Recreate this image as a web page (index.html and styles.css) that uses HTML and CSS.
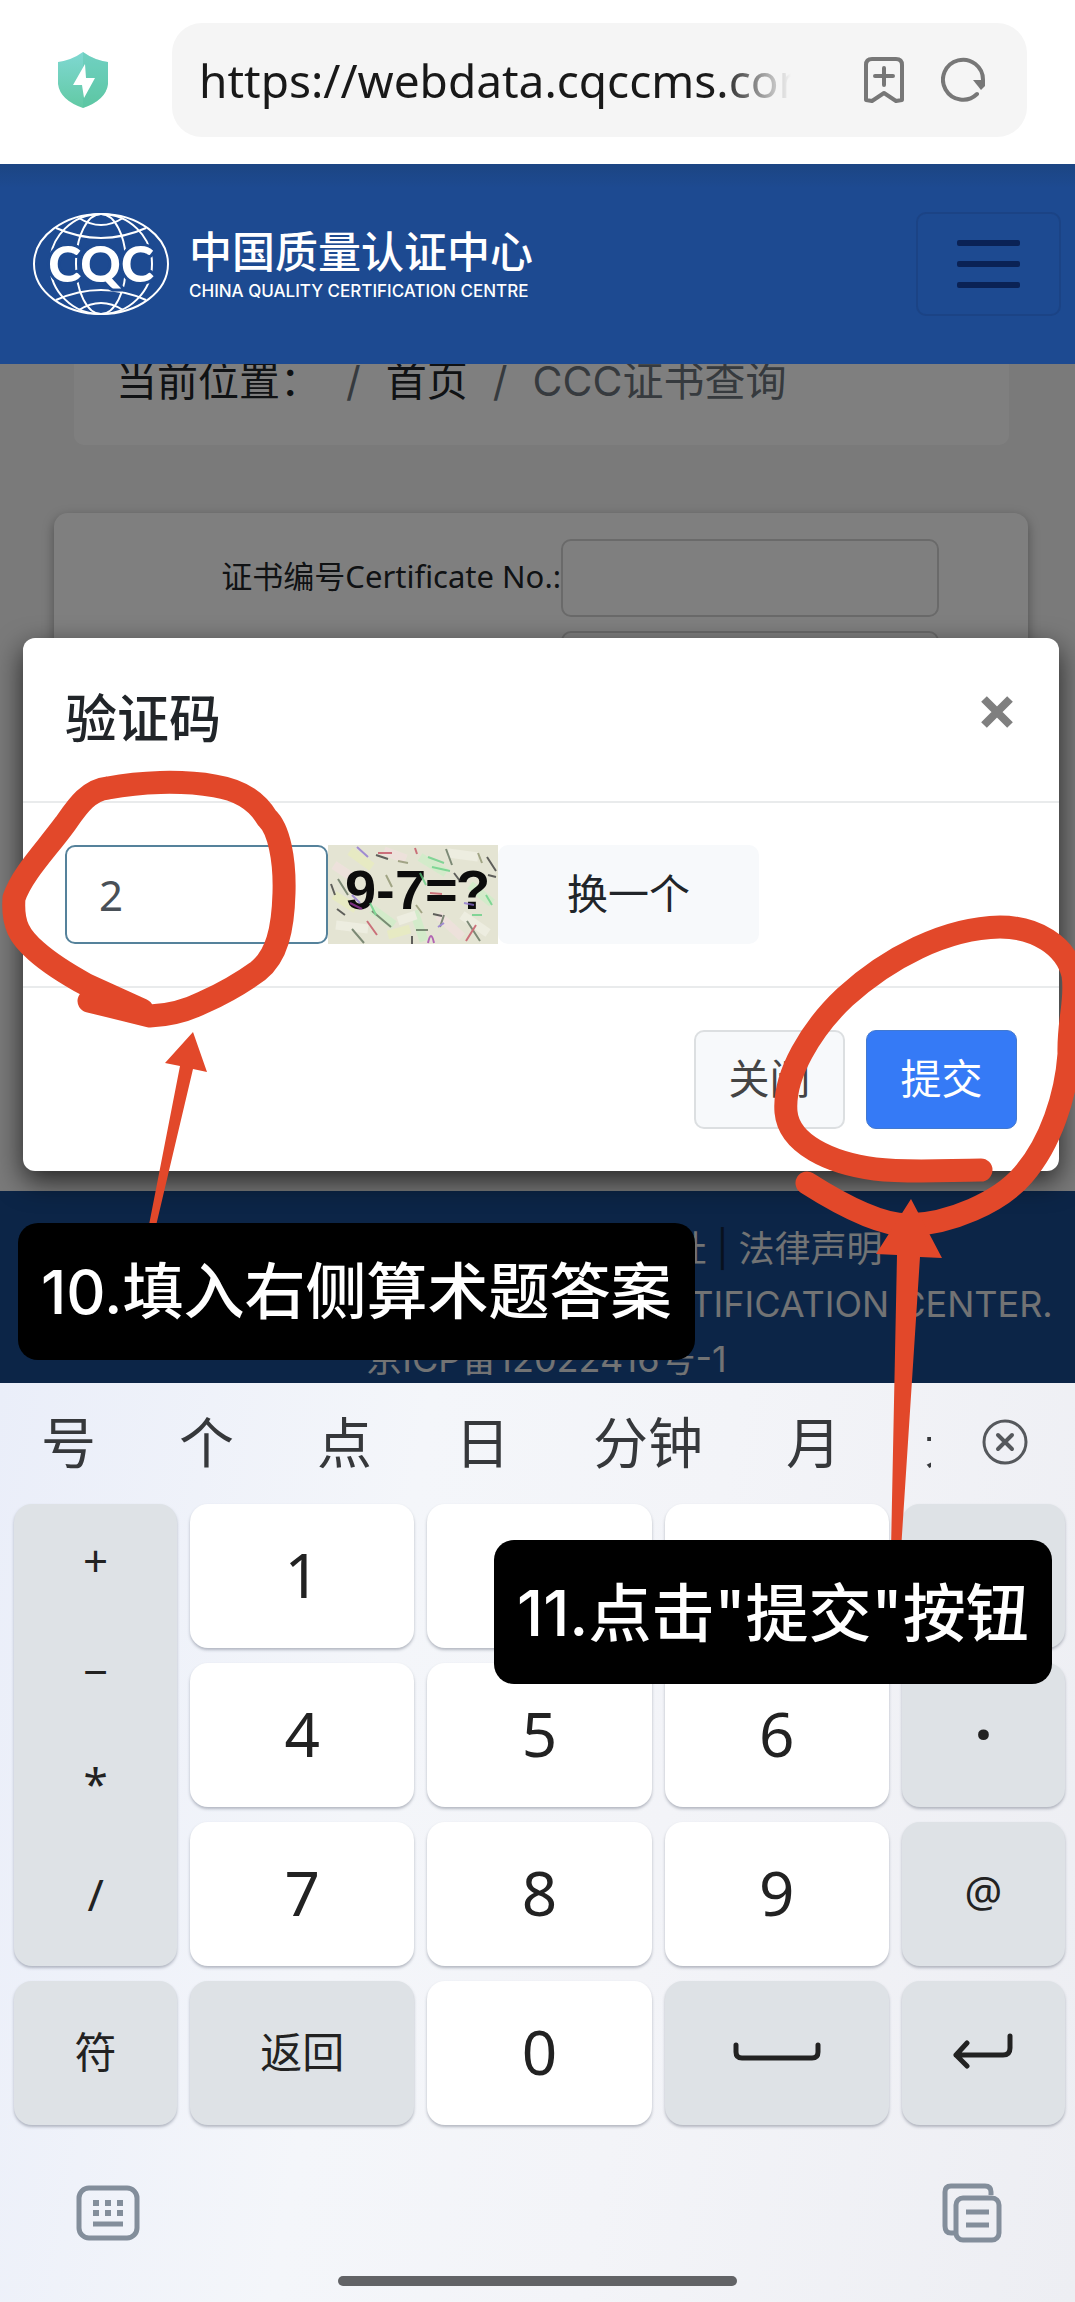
FILE: index.html
```
<!DOCTYPE html>
<html lang="zh-CN">
<head>
    <meta charset="UTF-8">
    <meta name="viewport" content="width=device-width, initial-scale=1.0">
    <title>CCC证书查询</title>
    <link rel="stylesheet" href="styles.css">
</head>
<body>
    <div class="address-bar">
        <svg class="shield" viewBox="0 0 50 56" aria-hidden="true">
            <defs>
                <linearGradient id="shield-fill" x1="0" y1="0" x2="0" y2="1">
                    <stop offset="0" stop-color="#7fd8d2"/>
                    <stop offset="1" stop-color="#62c9a4"/>
                </linearGradient>
            </defs>
            <path d="M25 0 Q36 8 50 10 V32 Q48 48 25 56 Q2 48 0 32 V10 Q14 8 25 0Z" fill="url(#shield-fill)"/>
            <path d="M25 0 Q36 8 50 10 V32 Q48 48 25 56Z" fill="#4fc0a0" opacity="0.3"/>
            <path d="M27 12 L15 33 H24 L26 46 L37 26 H28Z" fill="#fff"/>
        </svg>
        <div class="url-box">
            <span class="url">https://webdata.cqccms.com.cn</span>
            <button class="icon-button" aria-label="收藏">
                <svg width="42" height="48" viewBox="0 0 42 48" fill="none" stroke="#777" stroke-width="4" stroke-linejoin="round" stroke-linecap="round">
                    <path d="M3 9 Q3 3 9 3 H33 Q39 3 39 9 V44 L33 45 L21 37 L9 45 L3 44Z"/>
                    <path d="M21 12 V29 M12 20 H30"/>
                </svg>
            </button>
            <button class="icon-button" aria-label="刷新">
                <svg width="46" height="48" viewBox="0 0 46 48" fill="none" stroke="#777" stroke-width="4">
                    <path d="M36 38 A20 20 0 1 1 42 24" stroke-linecap="round"/>
                    <path d="M32 24 H44 V30 L40 34Z" fill="#777" stroke="none"/>
                </svg>
            </button>
        </div>
    </div>

    <div class="webview">
        <header class="navbar">
            <a class="brand" href="#">
                <svg class="globe" width="138" height="104" viewBox="0 0 138 104" fill="none" stroke="#fff" stroke-width="2">
                    <ellipse cx="69" cy="52" rx="67" ry="50"/>
                    <ellipse cx="69" cy="52" rx="51" ry="50"/>
                    <ellipse cx="69" cy="52" rx="25" ry="50"/>
                    <path d="M24 16 Q69 36 114 16 M24 88 Q69 68 114 88 M47 6 Q69 20 91 6 M47 98 Q69 84 91 98"/>
                    <text class="globe-text" x="69" y="70" text-anchor="middle">CQC</text>
                </svg>
                <span class="brand-name">
                    <span class="brand-cn">中国质量认证中心</span>
                    <span class="brand-en">CHINA QUALITY CERTIFICATION CENTRE</span>
                </span>
            </a>
            <button class="navbar-toggler" aria-label="菜单">
                <span></span>
                <span></span>
                <span></span>
            </button>
        </header>

        <main class="content">
            <nav class="breadcrumb">
                <span>当前位置：</span>
                <span class="slash">/</span>
                <a href="#">首页</a>
                <span class="slash">/</span>
                <span class="current">CCC证书查询</span>
            </nav>
            <form class="search-card">
                <label for="cert-no">证书编号Certificate No.:</label>
                <input type="text" id="cert-no">
                <label for="applicant">申请人Applicant:</label>
                <input type="text" id="applicant">
            </form>
        </main>

        <footer class="site-footer">
            <div><a href="#">关于我们</a><i>|</i><a href="#">联系我们</a><i>|</i><a href="#">中心地址</a><i>|</i><a href="#">法律声明</a></div>
            <div>COPYRIGHTS © CHINA QUALITY CERTIFICATION CENTER.</div>
            <div>京ICP备12022416号-1</div>
        </footer>

        <div class="backdrop"></div>

        <div class="modal" role="dialog" aria-labelledby="modal-title">
            <div class="modal-header">
                <h5 id="modal-title">验证码</h5>
                <button class="close" aria-label="关闭">
                    <svg width="34" height="34" viewBox="0 0 34 34" stroke="#7f7f7f" stroke-width="8">
                        <path d="M4 4 L30 30 M30 4 L4 30"/>
                    </svg>
                </button>
            </div>
            <div class="modal-body">
                <input type="text" class="code-input" value="2" aria-label="验证码">
                <svg class="captcha" width="170" height="99" viewBox="0 0 170 99">
                    <rect width="170" height="99" fill="#e4e4d3"/>
                    <g fill="none" stroke-width="9" opacity="0.5">
                        <path stroke="#eaf0b4" d="M22 6 L44 22 M6 50 L28 64 M60 90 L82 84"/>
                        <path stroke="#c3f3c3" d="M92 12 L118 28 M86 66 L96 96 M142 40 L164 58 M44 64 L66 80"/>
                        <path stroke="#f6dfe4" d="M6 20 L24 32 M110 70 L134 92 M56 6 L78 14"/>
                        <path stroke="#f7f6ee" d="M8 80 L40 84 M70 76 L88 70 M120 8 L150 12 M134 70 L160 88"/>
                    </g>
                    <text class="captcha-text" y="64"><tspan x="17">9</tspan><tspan x="48">-</tspan><tspan x="67">7</tspan><tspan x="97">=</tspan><tspan x="128">?</tspan></text>
                    <g fill="none" stroke-width="2" opacity="0.75">
                        <path stroke="#333" d="M3 39 L7 50 M9 64 L17 70 M48 10 L60 14 M159 12 L168 26 M160 30 L168 32 M105 69 L114 71 M84 91 V99 M126 28 L132 36"/>
                        <path stroke="#5a6b56" d="M24 84 L36 98 M44 66 L63 82 M88 85 H100 M116 70 L112 82 M118 4 L124 20 M139 76 L152 96 M10 34 L20 50"/>
                        <path stroke="#c24a5c" d="M39 76 L49 90 M102 48 L114 49 M50 8 L64 8 M87 3 L89 9 M138 96 L148 80"/>
                        <path stroke="#8a6fd0" d="M29 2 L40 12 M24 50 L32 58 M110 82 L116 78 M136 58 L146 60"/>
                        <path stroke="#a03aa8" d="M100 98 Q103 84 106 98 M22 58 L34 64"/>
                        <path stroke="#62cf82" d="M100 12 L116 18 M92 28 L98 40 M158 50 L164 60 M144 70 H154 M42 58 L48 70 M104 22 L122 26"/>
                        <path stroke="#8a8f6a" d="M58 30 L64 42 M70 16 L80 18 M88 60 L94 68 M150 8 L154 18"/>
                    </g>
                </svg>
                <button class="refresh-button">换一个</button>
            </div>
            <div class="modal-footer">
                <button class="btn close-button">关闭</button>
                <button class="btn submit-button">提交</button>
            </div>
        </div>
    </div>

    <div class="keyboard">
        <div class="candidates">
            <div class="candidate-list">
                <button>号</button>
                <button>个</button>
                <button>点</button>
                <button>日</button>
                <button>分钟</button>
                <button>月</button>
                <button>元</button>
            </div>
            <button class="clear" aria-label="清除">
                <svg width="46" height="46" viewBox="0 0 46 46" fill="none" stroke="#55585c" stroke-width="3" stroke-linecap="round">
                    <circle cx="23" cy="23" r="21"/>
                    <path d="M16 16 L30 30 M30 16 L16 30" stroke-width="4"/>
                </svg>
            </button>
        </div>
        <div class="keys">
            <div class="key gray symbols">
                <button>+</button>
                <button>−</button>
                <button>*</button>
                <button>/</button>
            </div>
            <button class="key">1</button>
            <button class="key">2</button>
            <button class="key">3</button>
            <button class="key gray" aria-label="删除"></button>
            <button class="key">4</button>
            <button class="key">5</button>
            <button class="key">6</button>
            <button class="key gray dot">·</button>
            <button class="key">7</button>
            <button class="key">8</button>
            <button class="key">9</button>
            <button class="key gray small">@</button>
            <button class="key gray small">符</button>
            <button class="key gray small">返回</button>
            <button class="key">0</button>
            <button class="key gray" aria-label="空格">
                <svg width="88" height="34" viewBox="0 0 88 34" fill="none" stroke="#222" stroke-width="5" stroke-linecap="round">
                    <path d="M3 11 V18 Q3 24 9 24 H79 Q85 24 85 18 V11"/>
                </svg>
            </button>
            <button class="key gray" aria-label="换行">
                <svg width="60" height="36" viewBox="0 0 60 36" fill="none" stroke="#222" stroke-width="5" stroke-linecap="round" stroke-linejoin="round">
                    <path d="M57 3 V15 Q57 22 50 22 H3 M14 10 L3 22 L14 33"/>
                </svg>
            </button>
        </div>
        <div class="tool-row">
            <button class="icon-button" aria-label="切换键盘">
                <svg width="64" height="56" viewBox="0 0 64 56" fill="none" stroke="#838e9b" stroke-width="5">
                    <rect x="3" y="3" width="58" height="50" rx="10"/>
                    <path d="M17 39 H47"/>
                    <path d="M17 18 H48 M17 28 H48" stroke-width="6" stroke-dasharray="6 6"/>
                </svg>
            </button>
            <button class="icon-button" aria-label="剪贴板">
                <svg width="60" height="60" viewBox="0 0 60 60" fill="none" stroke="#838e9b" stroke-width="5">
                    <path d="M12 50 H9 Q3 50 3 43 V9 Q3 3 9 3 H43 Q49 3 49 9 V12"/>
                    <rect x="14" y="15" width="43" height="42" rx="7"/>
                    <path d="M24 29 H47 M24 42 H47"/>
                </svg>
            </button>
        </div>
        <div class="home-bar"></div>
    </div>

    <!-- tutorial marks over the page -->
    <svg class="marks" viewBox="0 0 1075 2302" aria-hidden="true">
        <g fill="none" stroke="#e2482a" stroke-width="23" stroke-linecap="round" stroke-linejoin="round">
            <path d="M89 1001 L150 1016 Q178 1015 204 1002 Q233 989 258 971 C277 956 283 929 284 893 C285 860 279 829 267 818 C257 801 240 790 215 786 C180 780 140 782 108 788 C88 790 77 807 65 824 C46 850 22 874 14 898 C12 925 20 937 36 951 Q54 967 87 985 L142 1010"/>
            <path d="M807 1183 C840 1204 880 1225 908 1225 C950 1224 1000 1202 1023 1175 C1051 1143 1066 1095 1069 1054 C1068 1020 1077 1000 1073 975 C1066 945 1035 927 1000 927 C945 928 888 958 845 997 C812 1028 783 1075 786 1112 C789 1144 830 1163 875 1169 C910 1173 950 1170 981 1170"/>
        </g>
        <path fill="#e2482a" d="M193 1032 L207 1072 L193 1069 L155 1230 H148 L180 1066 L165 1063Z"/>
        <path fill="#e2482a" d="M911 1199 L942 1258 L920 1257 L901 1550 H891 L897 1255 L876 1254Z"/>
    </svg>
    <div class="tip tip-fill">10.填入右侧算术题答案</div>
    <div class="tip tip-submit">11.点击"提交"按钮</div>
</body>
</html>
```

FILE: styles.css
```
* {
    box-sizing: border-box;
}
body {
    margin: 0;
    position: relative;
    overflow-x: hidden;
    background-color: #fff;
    color: #212529;
    font-family: "Noto Sans", "Noto Sans CJK SC", sans-serif;
}
button {
    border: none;
    padding: 0;
    background: none;
    color: inherit;
    font-family: inherit;
    cursor: pointer;
}
input {
    font-family: inherit;
}
a {
    color: inherit;
    text-decoration: none;
}
svg {
    display: block;
    flex: none;
}

/* browser address bar */
.address-bar {
    display: flex;
    align-items: center;
    gap: 64px;
    height: 164px;
    padding: 0 48px 4px 58px;
}
.shield {
    width: 50px;
    height: 56px;
}
.url-box {
    flex: 1;
    min-width: 0;
    display: flex;
    align-items: center;
    gap: 36px;
    height: 114px;
    padding: 0 40px 0 27px;
    border-radius: 30px;
    background-color: #f5f5f5;
}
.url {
    flex: 1;
    overflow: hidden;
    margin-right: 36px;
    white-space: nowrap;
    font-size: 46px;
    color: #191919;
    -webkit-mask-image: linear-gradient(to right, #000 88%, transparent);
    mask-image: linear-gradient(to right, #000 88%, transparent);
}

/* site page */
.webview {
    position: relative;
    overflow: hidden;
    background-color: #f4f4f4;
}
.navbar {
    position: relative;
    z-index: 2;
    display: flex;
    align-items: center;
    justify-content: space-between;
    height: 200px;
    padding: 0 14px 0 32px;
    background: linear-gradient(#1c4583, #1d4a91 24px);
}
.brand {
    display: flex;
    align-items: center;
    gap: 19px;
    color: #fff;
}
.globe-text {
    font-family: Lato, sans-serif;
    font-size: 50px;
    font-weight: 900;
    fill: #fff;
    stroke: #1d4a91;
    stroke-width: 6px;
    paint-order: stroke;
}
.brand-name {
    display: flex;
    flex-direction: column;
    gap: 4px;
}
.brand-cn {
    font-size: 43px;
    font-weight: 500;
    line-height: 50px;
}
.brand-en {
    font-family: Inter, sans-serif;
    font-size: 17px;
    font-weight: 500;
    line-height: 20px;
}
.navbar-toggler {
    display: flex;
    flex-direction: column;
    align-items: center;
    justify-content: center;
    gap: 15px;
    width: 145px;
    height: 104px;
    border: 2px solid #1b4385;
    border-radius: 10px;
}
.navbar-toggler span {
    width: 63px;
    height: 6px;
    border-radius: 2px;
    background-color: #0a2255;
}
.content {
    min-height: 827px;
}
.breadcrumb {
    display: flex;
    gap: 25px;
    height: 81px;
    margin: 0 66px 0 74px;
    padding: 0 42px;
    border-radius: 0 0 10px 10px;
    background-color: #fff;
    font-family: Inter, "Noto Sans CJK SC", sans-serif;
    font-size: 41px;
    line-height: 34px;
}
.slash {
    color: #6c757d;
}
.current {
    color: #6c757d;
}
.search-card {
    display: grid;
    grid-template-columns: 1fr 378px;
    align-items: center;
    row-gap: 14px;
    margin: 68px 47px 0 54px;
    padding: 26px 89px 26px 0;
    border-radius: 14px;
    background-color: #fff;
    box-shadow: 0 4px 12px rgba(0, 0, 0, 0.35);
}
.search-card label {
    padding-bottom: 8px;
    text-align: right;
    font-size: 31px;
}
.search-card input {
    height: 78px;
    padding: 0 20px;
    border: 2px solid #d4d4d4;
    border-radius: 10px;
    background-color: #fff;
    font-size: 31px;
}
.site-footer {
    height: 192px;
    padding: 31px 0 0 18px;
    overflow: hidden;
    background-color: #184a8e;
    color: #e4e6e8;
    text-align: center;
    font-family: Inter, "Noto Sans CJK SC", sans-serif;
    font-size: 36px;
    line-height: 55px;
    white-space: nowrap;
}
.site-footer i {
    margin: 0 10px;
    color: #10233f;
    font-style: normal;
}

/* captcha modal */
.backdrop {
    position: absolute;
    inset: 0;
    background-color: rgba(0, 0, 0, 0.5);
}
.modal {
    position: absolute;
    top: 474px;
    left: 23px;
    right: 16px;
    border-radius: 12px;
    background-color: #fff;
    box-shadow: 0 10px 28px rgba(0, 0, 0, 0.7);
}
.modal-header {
    display: flex;
    align-items: center;
    justify-content: space-between;
    height: 165px;
    padding: 0 45px 0 42px;
    border-bottom: 2px solid #e9ebec;
}
.modal-header h5 {
    margin: 0;
    padding-bottom: 8px;
    font-size: 52px;
    font-weight: 500;
}
.close {
    margin-bottom: 16px;
}
.modal-body {
    display: flex;
    height: 185px;
    padding: 42px;
    border-bottom: 2px solid #e9ebec;
}
.code-input {
    width: 263px;
    height: 99px;
    padding: 0 32px;
    border: 2px solid #55829b;
    border-radius: 10px;
    background-color: #fff;
    color: #495057;
    font-size: 42px;
}
.refresh-button {
    width: 261px;
    height: 99px;
    padding-bottom: 8px;
    border-radius: 10px;
    background-color: #f7f9fb;
    font-size: 41px;
}
.captcha-text {
    font-family: "Liberation Sans", sans-serif;
    font-size: 56px;
    font-weight: 700;
    fill: #0c0c0c;
}
.modal-footer {
    display: flex;
    justify-content: flex-end;
    gap: 21px;
    padding: 42px;
}
.btn {
    width: 151px;
    height: 99px;
    padding-bottom: 8px;
    border-radius: 10px;
    font-size: 41px;
}
.close-button {
    border: 2px solid #dcdfe1;
    background-color: #f7f9fb;
    color: #444;
}
.submit-button {
    border: 1px solid #4379cf;
    background-color: #357af6;
    color: #fff;
}

/* numeric keyboard */
.keyboard {
    padding-bottom: 16px;
    background: linear-gradient(100deg, #eaeef9, #f4f6fa 35%, #f3f4f8 60%, #edeef3);
    color: #222;
}
.candidates {
    display: flex;
    align-items: center;
    justify-content: space-between;
    height: 121px;
    padding: 0 47px 4px 41px;
    color: #36383b;
}
.candidate-list {
    flex: 1;
    display: flex;
    gap: 83px;
    overflow: hidden;
    margin-right: 51px;
}
.candidate-list button {
    flex: none;
    font-size: 55px;
    line-height: 80px;
}
.keys {
    display: grid;
    grid-template-columns: 163fr 224fr 224fr 224fr 163fr;
    grid-auto-rows: 144px;
    gap: 15px 13px;
    padding: 0 10px 0 14px;
}
.key {
    display: flex;
    align-items: center;
    justify-content: center;
    padding-bottom: 4px;
    border-radius: 18px;
    background-color: #fff;
    box-shadow: 0 2px 3px rgba(60, 70, 90, 0.35);
    font-size: 62px;
}
.gray {
    background-color: #dee2e6;
}
.small {
    padding-bottom: 8px;
    font-size: 42px;
}
.dot {
    font-weight: 700;
}
.symbols {
    grid-row: span 3;
    flex-direction: column;
    justify-content: space-around;
    padding-bottom: 16px;
}
.symbols button {
    font-size: 44px;
}
.tool-row {
    display: flex;
    align-items: center;
    justify-content: space-between;
    height: 151px;
    padding: 24px 73px 0 76px;
}
.home-bar {
    width: 399px;
    height: 10px;
    margin: 0 auto;
    border-radius: 5px;
    background-color: #626366;
}

/* tutorial marks */
.marks {
    position: absolute;
    top: 0;
    left: 0;
    width: 100%;
    z-index: 5;
    pointer-events: none;
}
.tip {
    position: absolute;
    z-index: 6;
    display: flex;
    align-items: center;
    padding: 0 23px 8px;
    border-radius: 20px;
    background-color: #000;
    color: #fff;
    font-family: Inter, "Noto Sans CJK SC", sans-serif;
    font-weight: 500;
    white-space: nowrap;
}
.tip-fill {
    top: 1223px;
    left: 18px;
    height: 137px;
    font-size: 61px;
}
.tip-submit {
    top: 1540px;
    left: 494px;
    height: 144px;
    font-size: 63px;
}
```
